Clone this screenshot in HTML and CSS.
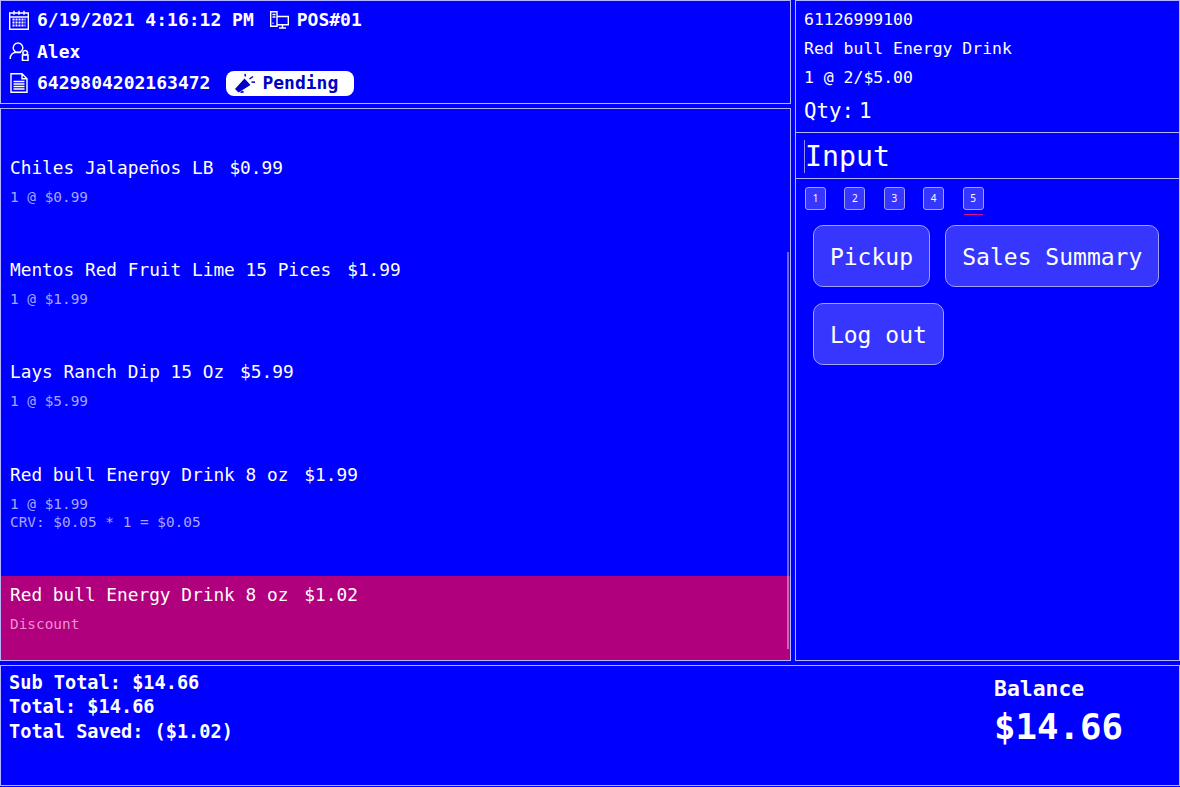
FILE: index.html
```html
<!DOCTYPE html>
<html lang="en">
<head>
<meta charset="utf-8">
<title>POS</title>
<link rel="stylesheet" href="styles.css">
</head>
<body>
<div class="app">
  <div class="main">
    <div class="left">
      <header class="panel info">
        <div class="info-row">
          <svg class="ic" viewBox="0 0 20 20"><path d="M.7 3h18.600v16.300H.7zM.7 7h18.600M5 .7v4M10 .7v4M15 .7v4"/><path class="dots" d="M3.500 9.500h13M3.500 12.500h13M3.500 15.500h13" stroke-dasharray="2 1"/></svg>
          <span>6/19/2021 4:16:12 PM</span>
          <svg class="ic ic-gap" viewBox="0 0 20 20"><path d="M1.700 1.700h6.300v14.600H1.700zM3.500 4.500h3M3.500 7h3M3.500 13.300h1M8 6.500h11.300v8.300H8M13.500 14.800v3M10 18h7"/></svg>
          <span>POS#01</span>
        </div>
        <div class="info-row">
          <svg class="ic" viewBox="0 0 20 20"><path d="M9 2a4.800 4.800 0 1 0 .01 0M1.200 18c0-4.500 3-7 7.800-7 1.200 0 2.300.2 3.200.6"/><path class="solid" d="M13.500 14h5.500v5.500h-5.500zM16.200 9.500a2.300 2.300 0 1 0 .01 0"/></svg>
          <span>Alex</span>
        </div>
        <div class="info-row">
          <svg class="ic" viewBox="0 0 20 20"><path d="M2 .8h11l5 5v13.500H2zM13 .8v5h5M4.500 8.500h11M4.500 11h11M4.500 13.500h11M4.500 16h11"/></svg>
          <span>6429804202163472</span>
          <span class="status">
            <svg class="mega" viewBox="0 0 22 20"><path class="solid" d="M1 16 10.500 5.500l6 6.500L4.500 19.500zM6 19l3-1.500 1 2-3 .5z"/><path d="M11.500 3.500 11 .8M15.500 6l3.500-2.500M17.500 9l3.500.3"/></svg>
            <span class="status-text">Pending</span>
          </span>
        </div>
      </header>
      <section class="panel list">
        <div class="scrollbar"></div>
        <article class="item">
          <div class="item-title"><span>Chiles Jalapeños LB</span><span>$0.99</span></div>
          <div class="item-sub">1 @ $0.99</div>
        </article>
        <article class="item">
          <div class="item-title"><span>Mentos Red Fruit Lime 15 Pices</span><span>$1.99</span></div>
          <div class="item-sub">1 @ $1.99</div>
        </article>
        <article class="item">
          <div class="item-title"><span>Lays Ranch Dip 15 Oz</span><span>$5.99</span></div>
          <div class="item-sub">1 @ $5.99</div>
        </article>
        <article class="item">
          <div class="item-title"><span>Red bull Energy Drink 8 oz</span><span>$1.99</span></div>
          <div class="item-sub">1 @ $1.99</div>
          <div class="item-sub">CRV: $0.05 * 1 = $0.05</div>
        </article>
        <article class="item selected">
          <div class="item-title"><span>Red bull Energy Drink 8 oz</span><span>$1.02</span></div>
          <div class="item-sub">Discount</div>
        </article>
      </section>
    </div>
    <aside class="panel right">
      <div class="product">
        <div class="product-line">61126999100</div>
        <div class="product-line">Red bull Energy Drink</div>
        <div class="product-line">1 @ 2/$5.00</div>
        <div class="qty"><span>Qty:</span><span>1</span></div>
      </div>
      <div class="input-row"><span class="input-text">Input</span></div>
      <nav class="tabs">
        <span class="tab">1</span>
        <span class="tab">2</span>
        <span class="tab">3</span>
        <span class="tab">4</span>
        <span class="tab active">5</span>
      </nav>
      <div class="actions">
        <button class="action">Pickup</button>
        <button class="action">Sales Summary</button>
        <button class="action">Log out</button>
      </div>
    </aside>
  </div>
  <footer class="panel totals">
    <div class="sums">
      <div>Sub Total: $14.66</div>
      <div>Total: $14.66</div>
      <div>Total Saved: ($1.02)</div>
    </div>
    <div class="balance">
      <div class="balance-label">Balance</div>
      <div class="balance-value">$14.66</div>
    </div>
  </footer>
</div>
</body>
</html>
```
FILE: styles.css
```css
* { box-sizing: border-box; }
html, body { margin: 0; height: 100%; }
body {
  background: #0000ff;
  color: #fff;
  font-family: "DejaVu Sans Mono", "Liberation Mono", monospace;
  overflow: hidden;
}
.app { width: 1180px; height: 787px; display: flex; flex-direction: column; gap: 4px; }
.main { display: flex; gap: 4px; height: 661px; }
.panel { border: 1px solid #b4b4ff; }
.left { width: 791px; display: flex; flex-direction: column; gap: 4px; }

.info { height: 104px; padding: 3px 0 0 8px; font-weight: bold; font-size: 18px; }
.info-row { display: flex; align-items: center; height: 31.500px; }
.ic { width: 20px; height: 20px; margin-right: 8px; fill: none; stroke: #fff; stroke-width: 1.4; flex: none; }
.ic .dots { stroke-width: 1.8; }
.ic .solid { stroke-width: 1.600; }
.ic-gap { margin-left: 15px; }
.status {
  display: flex; align-items: center; gap: 6px;
  margin: 1px 0 0 16px; width: 128px; height: 25px; padding-left: 8px;
  background: #fff; color: #0000c8; border-radius: 8px;
}
.status-text { margin-top: -1px; }
.mega { width: 22px; height: 20px; fill: none; stroke: #0000c8; stroke-width: 1.500; flex: none; }
.mega .solid { fill: #0000c8; stroke: none; }

.list { position: relative; flex: 1; padding-top: 40px; display: flex; flex-direction: column; gap: 18.300px; }
.scrollbar { position: absolute; right: 1.500px; top: 143px; bottom: 11px; width: 2px; background: rgba(255,255,255,.4); }
.item { padding: 8px 9px 27px; }
.item-title { display: flex; gap: 16px; height: 22px; line-height: 22px; font-size: 17.800px; margin-bottom: 9px; }
.item-sub { font-size: 14.400px; line-height: 18px; height: 18px; color: #a6a6ff; }
.selected { background: #b0007e; }
.selected .item-sub { color: #f08fd2; }

.right { flex: 1; display: flex; flex-direction: column; }
.product { height: 132px; padding: 4px 8px 0; border-bottom: 1px solid #b4b4ff; }
.product-line { height: 29px; line-height: 29px; font-size: 16.450px; }
.qty { display: flex; gap: 5px; font-size: 20.800px; height: 38px; line-height: 38px; }
.input-row { height: 46px; padding: 7px 0 0 8px; border-bottom: 1px solid #b4b4ff; }
.input-text { display: block; height: 33px; line-height: 33px; font-size: 28.200px; border-left: 1px solid #8f8fff; }
.tabs { display: flex; gap: 18.400px; padding: 8px 0 0 9px; }
.tab {
  position: relative; width: 21px; height: 23px; text-align: center;
  font: 10px/21px "Noto Sans", sans-serif;
  background: #3636ff; border: 1px solid #a0a0ff; border-radius: 3px;
}
.active::after { content: ""; position: absolute; left: 0; right: 0; bottom: -6px; height: 1px; background: #e0108f; }
.actions { display: flex; flex-wrap: wrap; gap: 16px 15.500px; padding: 15px 16px 0 17px; }
.action {
  height: 62px; padding: 2px 15.900px 0;
  font-family: inherit; font-size: 23px; color: #fff;
  background: #3636ff; border: 1px solid #a0a0ff; border-radius: 10px;
}

.totals { height: 121px; display: flex; justify-content: space-between; padding: 5px 55px 0 8px; font-weight: bold; }
.sums { font-size: 18.600px; line-height: 24.300px; }
.balance { width: 130px; padding-top: 5px; }
.balance-label { font-size: 21.400px; line-height: 26px; }
.balance-value { font-size: 35.700px; line-height: 50px; }
```
